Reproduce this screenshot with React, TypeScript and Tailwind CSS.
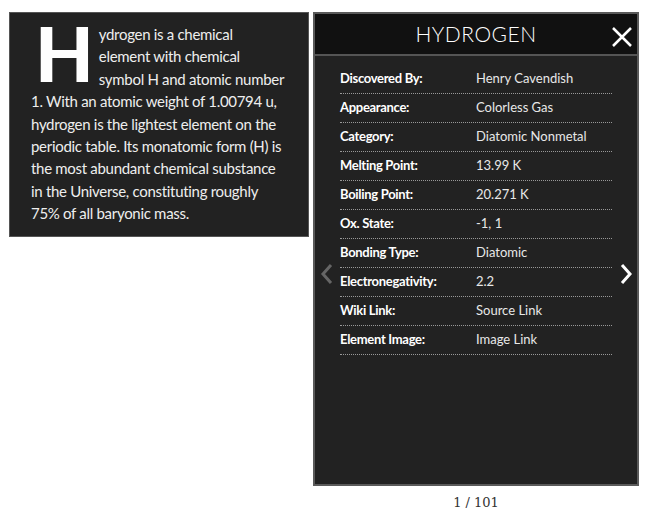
import React from "react";

const rows: [string, string][] = [
  ["Discovered By:", "Henry Cavendish"],
  ["Appearance:", "Colorless Gas"],
  ["Category:", "Diatomic Nonmetal"],
  ["Melting Point:", "13.99 K"],
  ["Boiling Point:", "20.271 K"],
  ["Ox. State:", "-1, 1"],
  ["Bonding Type:", "Diatomic"],
  ["Electronegativity:", "2.2"],
  ["Wiki Link:", "Source Link"],
  ["Element Image:", "Image Link"],
];

const Chevron = ({ dir, className }: { dir: "left" | "right"; className: string }) => (
  <svg width="14" height="22" viewBox="0 0 14 22" className={className}>
    <path
      d={dir === "left" ? "M11 2 L3 11 L11 20" : "M3 2 L11 11 L3 20"}
      fill="none"
      stroke="currentColor"
      strokeWidth="3"
    />
  </svg>
);

export default function App() {
  return (
    <div className="flex items-start gap-[4px] pl-[9px] pt-[12px] font-['Lato',sans-serif]">
      <div className="w-[300px] border border-[#555] bg-[#222] pl-[21px] pr-[19px] pt-[10px] pb-[11px] text-[15px] leading-[22.4px] tracking-[-0.3px] text-[#eee]">
        <span className="float-left mr-[5px] ml-[4px] text-[76px] font-black leading-[60px] tracking-normal text-white">
          H
        </span>
        ydrogen is a chemical
        <br />
        element with chemical
        <br />
        symbol H and atomic number 1. With an atomic weight of 1.00794 u, hydrogen is the lightest
        element on the periodic table. Its monatomic form (H) is the most abundant chemical substance
        in the Universe, constituting roughly 75% of all baryonic mass.
      </div>

      <div className="flex flex-col items-center">
        <div className="relative flex h-[474px] w-[326px] flex-col border-2 border-[#5a5a5a] bg-[#222]">
          <div className="relative flex h-[42px] items-center justify-center border-b-2 border-[#555] bg-[#111]">
            <span className="text-[21px] font-light tracking-[0.5px] text-white">HYDROGEN</span>
            <svg width="22" height="22" viewBox="0 0 22 22" className="absolute right-[4px] top-[12px] text-white">
              <path d="M2 2 L20 20 M20 2 L2 20" stroke="currentColor" strokeWidth="2.5" />
            </svg>
          </div>
          <div className="px-[25px] pt-[9px]">
            {rows.map(([k, v]) => (
              <div
                key={k}
                className="flex h-[29px] items-center border-b border-dotted border-[#999] text-[13px]"
              >
                <span className="w-[136px] font-bold tracking-[-0.3px] text-white">{k}</span>
                <span className="text-[#e8e8e8]">{v}</span>
              </div>
            ))}
          </div>
          <Chevron dir="left" className="absolute left-[5px] top-[249px] text-[#666]" />
          <Chevron dir="right" className="absolute right-[4px] top-[249px] text-white" />
        </div>
        <div className="mt-[7px] font-['DejaVu_Serif',serif] text-[13px] text-[#333]">1 / 101</div>
      </div>
    </div>
  );
}
